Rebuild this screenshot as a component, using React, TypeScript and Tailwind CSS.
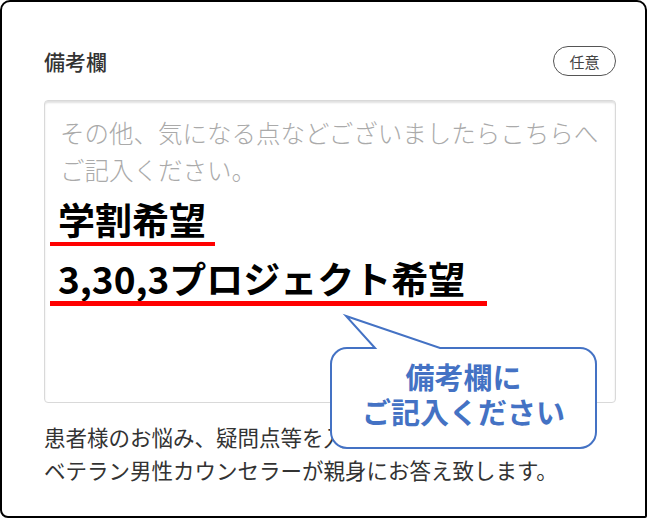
export default function App() {
  return (
    <div className="w-[648px] h-[519px] bg-white font-['Noto_Sans_CJK_JP','Noto_Sans',sans-serif]">
      <div className="relative box-border w-[647px] h-[518px] border-2 border-black rounded-tl-[10px] rounded-tr-[10px] rounded-bl-[8px] rounded-br-[2px] pl-[42px] pr-[29px] pt-[44px]">
        <div className="flex items-center justify-between h-[30px]">
          <h2 className="text-[21px] font-medium text-[#333] leading-none">備考欄</h2>
          <span className="box-border h-[30px] w-[63px] rounded-full border-[1.5px] border-[#555] flex items-center justify-center text-[15px] text-[#444] leading-none">
            任意
          </span>
        </div>

        <div className="mt-[24px] box-border h-[303px] border border-[#d9d9d9] rounded-[4px] shadow-[inset_0_2px_2px_rgba(0,0,0,0.12)] pl-[15px] pt-[13px]">
          <p className="text-[24.5px] leading-[37px] text-[#aaa] font-light whitespace-nowrap">
            その他、気になる点などございましたらこちらへ
            <br />
            ご記入ください。
          </p>
          <div className="mt-[2px] -ml-[2px] text-[37px] leading-[59px] font-bold text-black">
            <p>学割希望</p>
            <p>3,30,3プロジェクト希望</p>
          </div>
        </div>

        <p className="mt-[17px] text-[21.5px] leading-[33px] text-[#333] whitespace-nowrap">
          患者様のお悩み、疑問点等を入力ください。
          <br />
          ベテラン男性カウンセラーが親身にお答え致します。
        </p>

        <div className="absolute left-[48px] top-[240px] w-[165px] h-[4px] bg-[#ff0000]" />
        <div className="absolute left-[48px] top-[299px] w-[437px] h-[5px] bg-[#ff0000]" />

        <svg
          className="absolute left-[318px] top-[308px]"
          width="290"
          height="145"
          viewBox="0 0 290 145"
        >
          <path
            d="M27 38 L55 38 L26 6 L120 38 L260 38 A16 16 0 0 1 276 54 L276 122 A16 16 0 0 1 260 138 L27 138 A16 16 0 0 1 11 122 L11 54 A16 16 0 0 1 27 38 Z"
            fill="#ffffff"
            stroke="#4472C4"
            strokeWidth="2"
            strokeLinejoin="miter"
          />
        </svg>
        <div className="absolute left-[329px] top-[346px] w-[265px] h-[100px] flex flex-col items-center pt-[11px] text-[29px] leading-[35px] font-bold text-[#4472C4]">
          <span>備考欄に</span>
          <span>ご記入ください</span>
        </div>
      </div>
    </div>
  );
}
